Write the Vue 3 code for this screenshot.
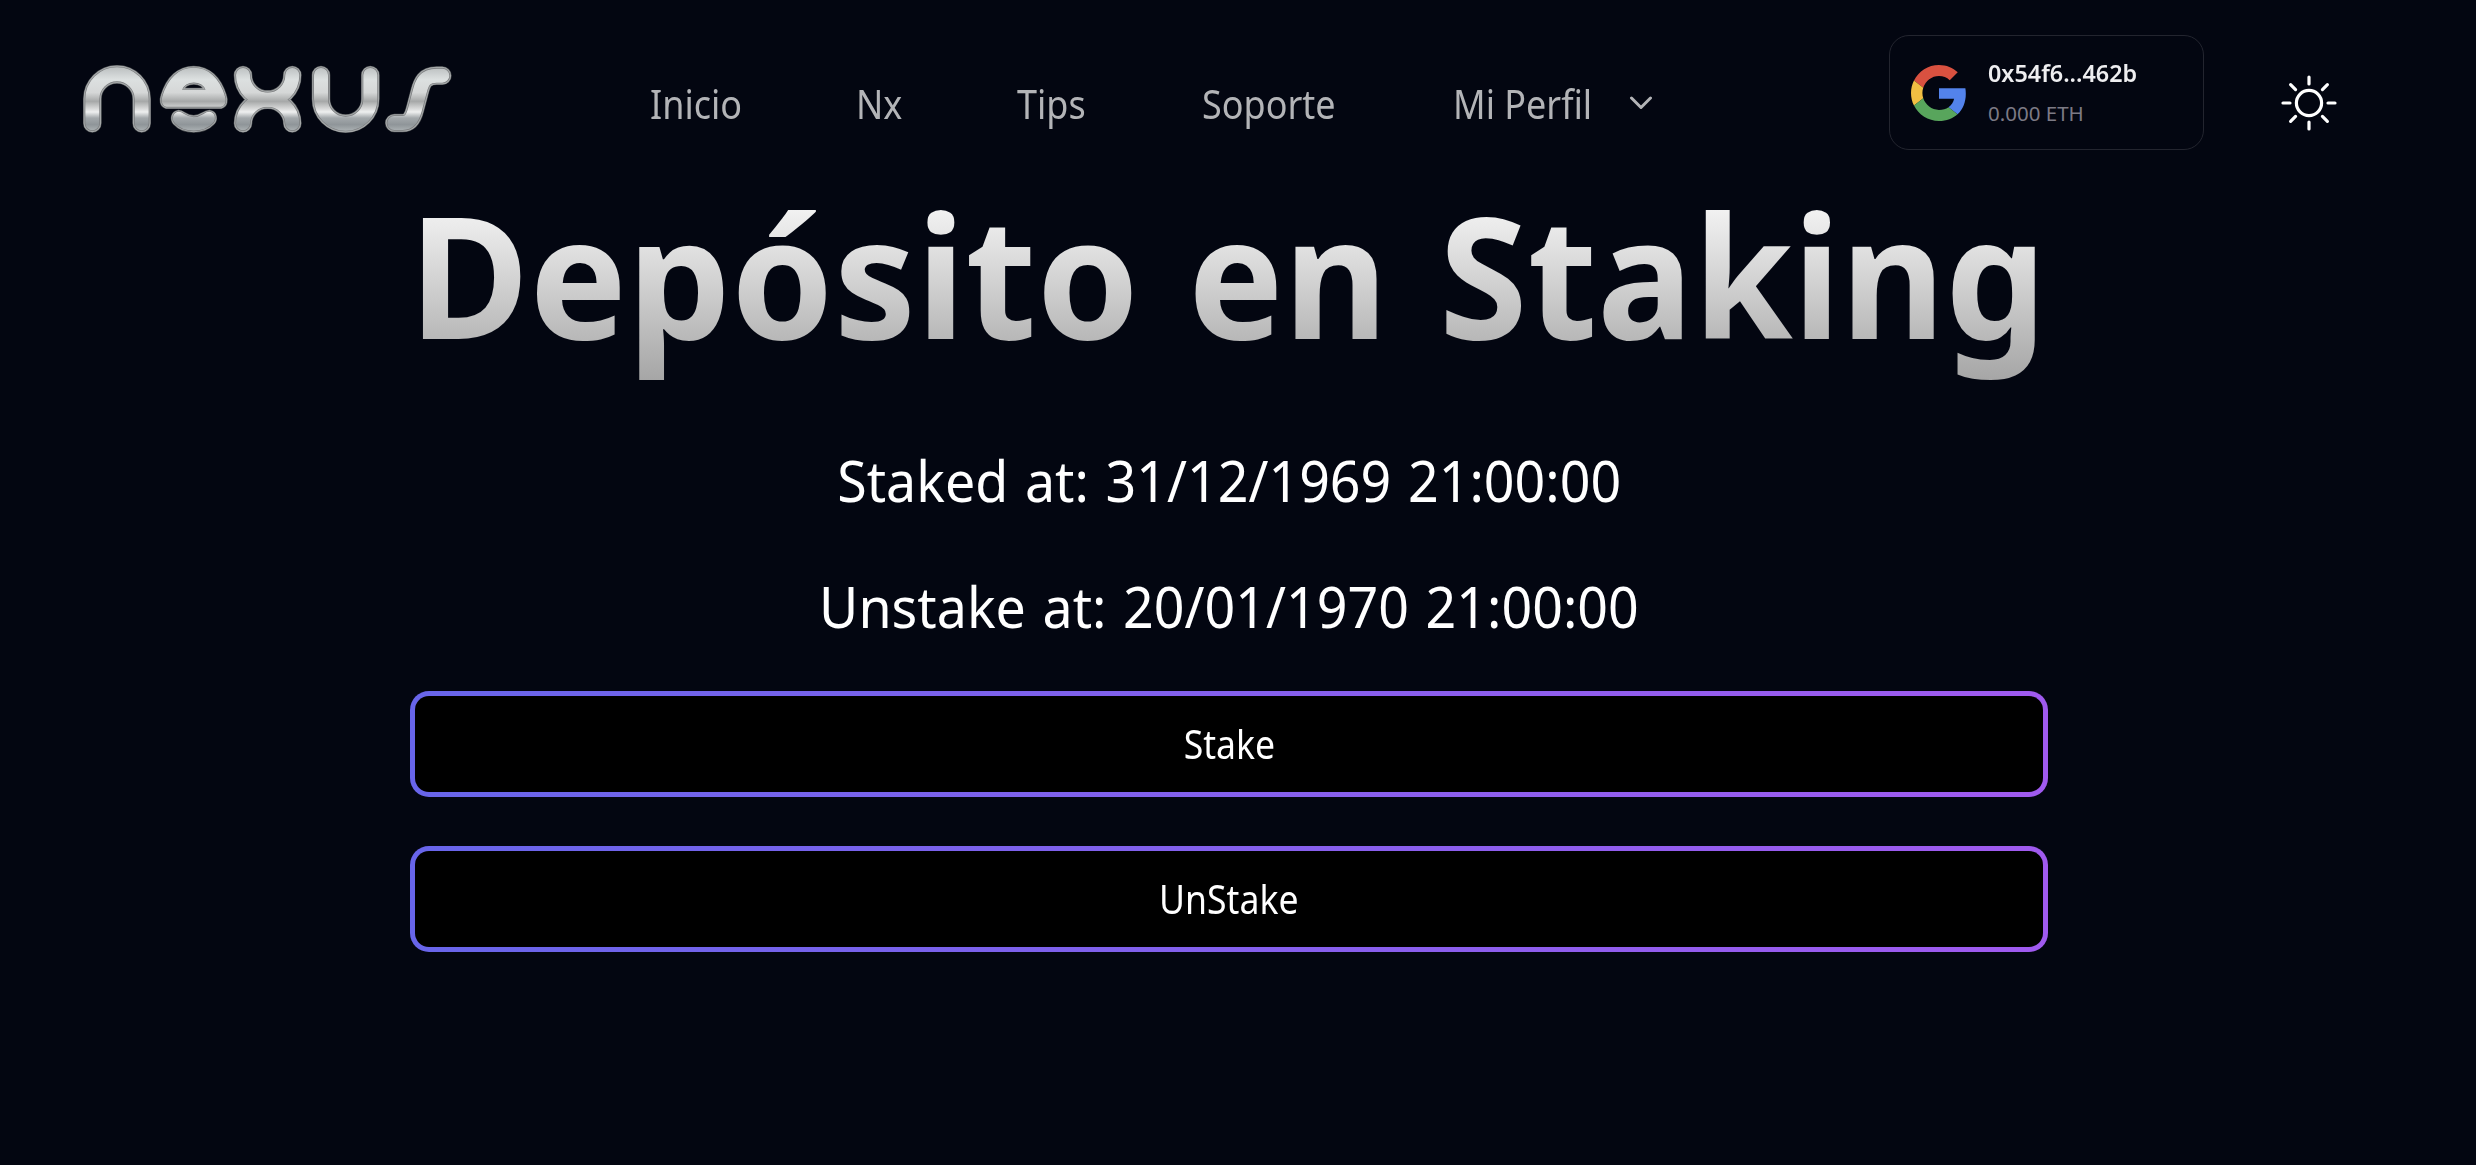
<script setup>
const links = ['Inicio', 'Nx', 'Tips', 'Soporte']
const actions = ['Stake', 'UnStake']
const rays = [0, 45, 90, 135, 180, 225, 270, 315]
const layers = ['edge', 'rim', 'groove', 'face']
</script>

<template>
  <div class="page">
    <header class="bar">
      <svg class="logo" viewBox="0 0 1200 300" aria-label="nexus">
        <defs>
          <linearGradient id="chrome" gradientUnits="userSpaceOnUse" x1="0" y1="48" x2="0" y2="248">
            <stop offset="0" stop-color="#b8bcbd" />
            <stop offset=".2" stop-color="#dce0e0" />
            <stop offset=".4" stop-color="#d5d7d7" />
            <stop offset=".53" stop-color="#a6a8a8" />
            <stop offset=".62" stop-color="#cfd0d0" />
            <stop offset=".69" stop-color="#eeefef" />
            <stop offset=".78" stop-color="#a3a8ab" />
            <stop offset=".88" stop-color="#8f9599" />
            <stop offset="1" stop-color="#b4b9bb" />
          </linearGradient>
          <g id="strokes">
            <path d="M67 220V147A74 74 0 0 1 215 147V220" />
            <path d="M519 75A74 74 0 0 0 593 149A74 74 0 0 0 667 75" />
            <path d="M519 220A74 72 0 0 1 593 149A74 72 0 0 1 667 220" />
            <path d="M753 75V147A74 74 0 0 0 901 147V75" />
            <path d="M1117 77H1100C1064 77 1056 98 1049 125L1035 178C1028 206 1018 219 998 219H973" />
          </g>
          <g id="solids">
            <path fill-rule="evenodd" d="M290 168C276 164 276 150 280 138C296 86 328 56 371 56C414 56 446 86 462 138C466 150 466 164 452 168ZM332 122H411C400 86 343 86 332 122Z" />
            <path d="M326 188C340 188 345 204 371 204C397 204 402 188 418 188C434 190 436 208 426 218C400 246 342 246 317 218C307 208 310 190 326 188Z" />
          </g>
        </defs>
        <g v-for="layer in layers" :key="layer" :class="layer">
          <use href="#strokes" class="line" />
          <use href="#solids" class="solid" />
        </g>
      </svg>
      <nav class="nav">
        <a v-for="l in links" :key="l"><span class="t">{{ l }}</span></a>
        <a><span class="t">Mi Perfil</span></a>
        <svg class="chev" viewBox="0 0 24 14"><path d="M2.5 2L12 11.5L21.5 2" /></svg>
      </nav>
      <div class="wallet">
        <svg class="google" viewBox="0 0 48 48">
          <path fill="#d95140" d="M24 9.5c3.54 0 6.71 1.22 9.21 3.6l6.85-6.85C35.9 2.38 30.47 0 24 0 14.62 0 6.51 5.38 2.56 13.22l7.98 6.19C12.43 13.72 17.74 9.5 24 9.5z" />
          <path fill="#5383ec" d="M46.98 24.55c0-1.57-.15-3.09-.38-4.55H24v9.02h12.94c-.58 2.96-2.26 5.48-4.78 7.18l7.73 6c4.51-4.18 7.09-10.36 7.09-17.65z" />
          <path fill="#f2bf42" d="M10.53 28.59c-.48-1.45-.76-2.99-.76-4.59s.27-3.14.76-4.59l-7.98-6.19C.92 16.46 0 20.12 0 24c0 3.88.92 7.54 2.56 10.78l7.97-6.19z" />
          <path fill="#58a55c" d="M24 48c6.48 0 11.93-2.13 15.89-5.81l-7.73-6c-2.15 1.45-4.92 2.3-8.16 2.3-6.26 0-11.57-4.22-13.47-9.91l-7.98 6.19C6.51 42.62 14.62 48 24 48z" />
        </svg>
        <div class="account">
          <div class="address"><span class="t">0x54f6...462b</span></div>
          <div class="balance"><span class="t">0.000 ETH</span></div>
        </div>
      </div>
      <svg class="sun" viewBox="-30 -30 60 60">
        <circle r="12.6" />
        <path v-for="r in rays" :key="r" d="M0 -19V-26" :transform="`rotate(${r})`" />
      </svg>
    </header>
    <main class="content">
      <h1>
        <span class="t first">Depósito</span>
        <span class="t second">en</span>
        <span class="t third">Staking</span>
      </h1>
      <p><span class="t">Staked at: 31/12/1969 21:00:00</span></p>
      <p><span class="t">Unstake at: 20/01/1970 21:00:00</span></p>
      <div class="actions">
        <button v-for="a in actions" :key="a"><span class="t">{{ a }}</span></button>
      </div>
    </main>
  </div>
</template>

<style>
body { background: #030611; }
</style>

<style scoped>
.page {
  height: 1165px;
  box-sizing: border-box;
  overflow: hidden;
  background: #030611;
  font-family: "Noto Sans", "Open Sans", sans-serif;
  color: #fff;
}
.t { display: inline-block; white-space: nowrap; }
.bar { display: flex; height: 190px; }
.logo { flex: none; width: 400px; height: 100px; margin: 50px 0 0 70px; }
.line { fill: none; stroke-linecap: round; stroke-linejoin: round; }
.solid { stroke-linejoin: round; }
.edge .line { stroke: #4a4d50; stroke-width: 56px; }
.edge .solid { fill: #4a4d50; stroke: #4a4d50; stroke-width: 18px; }
.rim .line { stroke: #a5a8a9; stroke-width: 53px; }
.rim .solid { fill: #a5a8a9; stroke: #a5a8a9; stroke-width: 15px; }
.groove .line { stroke: #77797b; stroke-width: 46px; }
.groove .solid { fill: #77797b; stroke: #77797b; stroke-width: 9px; }
.face .line { stroke: url(#chrome); stroke-width: 42px; }
.face .solid { fill: url(#chrome); stroke: url(#chrome); stroke-width: 5px; }
.nav {
  display: grid;
  grid-template-columns: 206px 161px 185px 251px 175px 28px;
  width: 1239px;
  margin-left: 180px;
  font-size: 39.2px;
  line-height: 60px;
  padding-top: 74px;
  box-sizing: border-box;
  color: #b3b4b7;
}
.nav .t { transform: scaleX(.918); transform-origin: left; }
.chev { width: 24px; height: 14px; margin: 22px 0 0 1px; }
.chev path { fill: none; stroke: #b3b4b7; stroke-width: 3px; stroke-linecap: round; stroke-linejoin: round; }
.wallet {
  flex: none;
  display: flex;
  align-items: center;
  box-sizing: border-box;
  width: 315px;
  height: 115px;
  margin-top: 35px;
  padding-left: 21px;
  border: 1px solid #23252f;
  border-radius: 20px;
}
.google { width: 56px; height: 56px; margin-right: 21px; }
.account { padding-top: 2px; }
.address { font-size: 24px; font-weight: 600; line-height: 40px; color: #eeeef0; }
.address .t { transform: scaleX(.973); transform-origin: left; }
.balance { font-size: 20.5px; line-height: 41px; color: #7c7a85; }
.sun { width: 60px; height: 60px; margin: 73px 0 0 75px; flex: none; }
.sun circle, .sun path { fill: none; stroke: #fff; stroke-width: 3.2px; stroke-linecap: round; }
.content {
  display: flex;
  flex-direction: column;
  align-items: center;
  width: 1638px;
  margin-left: 410px;
}
h1 {
  display: flex;
  align-self: flex-start;
  margin: 0 0 0 -1.5px;
  height: 208px;
  font-size: 169.5px;
  line-height: 168px;
  font-weight: 700;
}
h1 .t {
  height: 198px;
  transform-origin: left;
  background: linear-gradient(180deg, #f6f6f6 5%, #a4a4a4 98%);
  -webkit-background-clip: text;
  background-clip: text;
  color: transparent;
}
h1 .first { transform: scaleX(.969); }
h1 .second { margin-left: 26px; transform: scaleX(.945); }
h1 .third { margin-left: 39.5px; transform: scaleX(.947); }
p { margin: 0; height: 126px; font-size: 56.5px; line-height: 166px; }
p .t { word-spacing: 2.8px; transform: scaleX(.951); }
.actions {
  display: flex;
  flex-direction: column;
  gap: 49px;
  width: 100%;
  padding-top: 41px;
}
button {
  height: 106px;
  padding: 0;
  font: inherit;
  font-size: 39.2px;
  line-height: 96px;
  color: #fff;
  border: 5px solid transparent;
  border-radius: 19px;
  background: linear-gradient(#000, #000) padding-box, linear-gradient(90deg, #6865ea, #a05aef) border-box;
}
button .t { transform: scaleX(.908); }
</style>
